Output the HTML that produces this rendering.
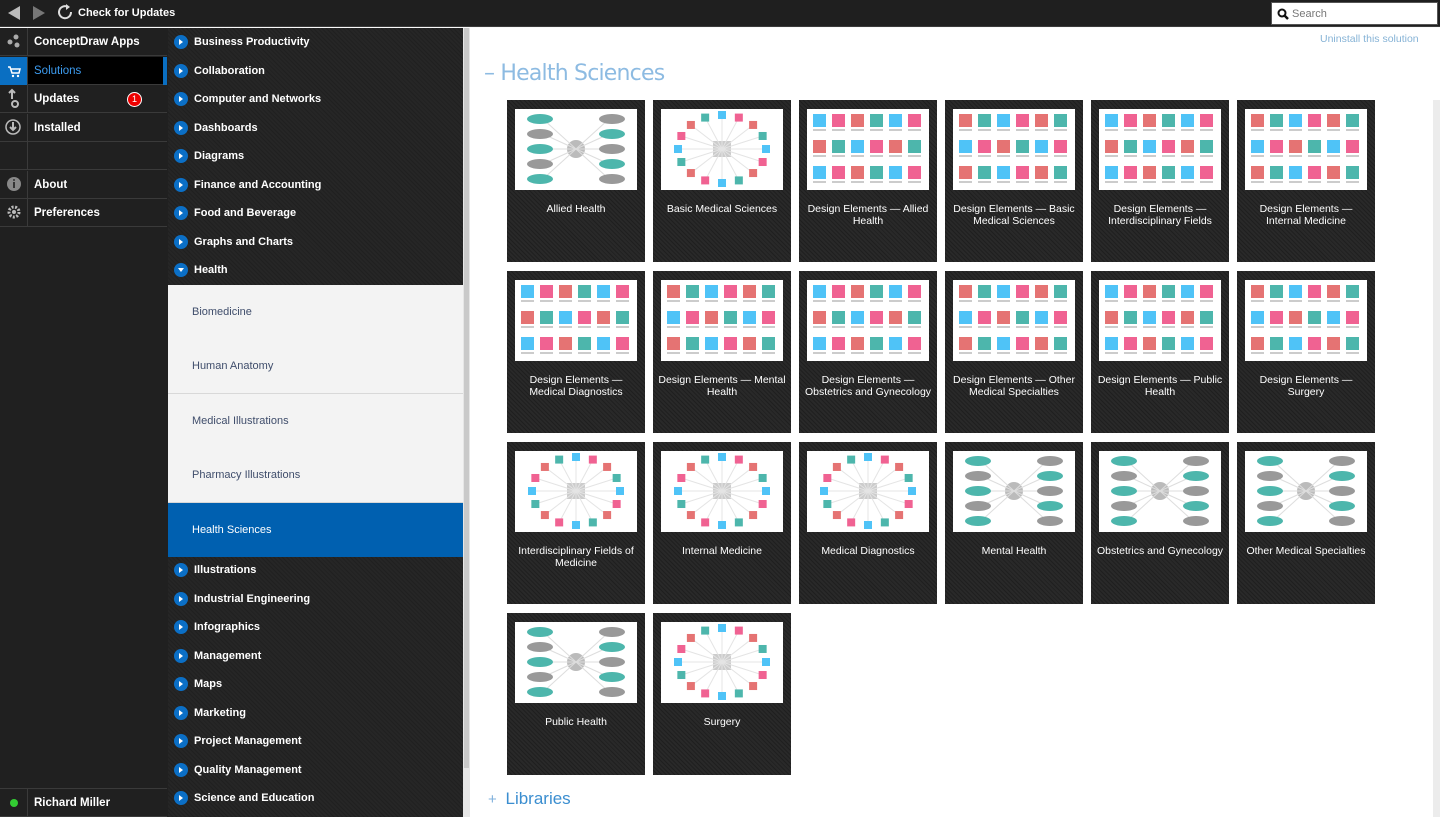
<!DOCTYPE html>
<html><head><meta charset="utf-8"><style>
*{margin:0;padding:0;box-sizing:border-box}
body{width:1440px;height:817px;overflow:hidden;background:#fafafa;font-family:"Liberation Sans",sans-serif;position:relative}
.top{position:absolute;left:0;top:0;width:1440px;height:27px;background:#1f1f1f;border-bottom:1px solid #3a3a3a}
.top .t{position:absolute;left:78px;top:7px;color:#fff;font-size:11px;font-weight:bold}
.search{position:absolute;left:1271px;top:2px;width:167px;height:23px;background:#fff;border:1px solid #555}
.search span{position:absolute;left:20px;top:5px;font-size:11px;color:#777}
.nav{position:absolute;left:0;top:28px;width:168px;height:789px;background:#202020}
.nav .r{position:absolute;left:0;width:167px;height:28px;border-bottom:1px solid #3a3a3a}
.nav .r .ic{position:absolute;left:0;top:0;width:28px;height:28px;border-right:1px solid #3a3a3a}
.nav .r span{position:absolute;left:34px;top:8px;color:#fff;font-size:11.5px;font-weight:bold}
.col2{position:absolute;left:168px;top:28px;width:295px;height:789px;background:#242424;background-image:repeating-linear-gradient(45deg,#202020 0 1px,#262626 1px 3px)}
.it{position:absolute;left:0;width:295px;height:28px}
.it i{position:absolute;left:6px;top:7px;width:14px;height:14px;border-radius:50%;background:#0b6fc6}
.it i:after{content:"";position:absolute;left:5px;top:4px;border-left:4px solid #fff;border-top:3px solid transparent;border-bottom:3px solid transparent}
.it i.d:after{left:4px;top:5px;border-top:4px solid #fff;border-left:3px solid transparent;border-right:3px solid transparent;border-bottom:0}
.it span{position:absolute;left:26px;top:8px;color:#fff;font-size:11px;font-weight:bold}
.sub{position:absolute;left:0;width:295px;height:55px;background:#f3f3f3;border-bottom:1px solid #d8d8d8}
.sub span{position:absolute;left:24px;top:21px;font-size:11px;color:#3f4d6b}
.sb{position:absolute;left:463px;top:28px;width:7px;height:789px;background:#e6e6e6}
.sb div{position:absolute;left:1px;top:0;width:5px;height:740px;background:#c9c9c9}
.content{position:absolute;left:470px;top:28px;width:970px;height:789px;background:#fff}
h1{position:absolute;left:484px;top:61px;font-weight:normal;font-size:22px;color:#8dbbe2;font-family:"DejaVu Sans","Liberation Sans",sans-serif;letter-spacing:-0.8px}
.card{position:absolute;width:138px;height:162px;background:#232323;background-image:repeating-linear-gradient(45deg,#1f1f1f 0 1px,#292929 1px 3px)}
.card .th{position:absolute;left:8px;top:9px;width:122px;height:81px;background:#fff;overflow:hidden}
.card .tt{position:absolute;left:4px;right:4px;top:103px;text-align:center;color:#fff;font-size:10.5px;line-height:12px}
.rsb{position:absolute;left:1433px;top:100px;width:7px;height:717px;background:#ececec}
</style></head><body>
<div class="top">
<svg style="position:absolute;left:6px;top:5px" width="16" height="16"><path d="M14 1L2 8l12 7z" fill="#bbb"/></svg>
<svg style="position:absolute;left:31px;top:5px" width="16" height="16"><path d="M2 1l12 7-12 7z" fill="#777"/></svg>
<svg style="position:absolute;left:57px;top:4px" width="18" height="18"><path d="M14 8a6 6 0 1 1-3-5" fill="none" stroke="#ddd" stroke-width="2"/><path d="M9 0l4 3-4 3z" fill="#ddd"/></svg>
<div class="t">Check for Updates</div>
<div class="search"><svg style="position:absolute;left:5px;top:5px" width="12" height="12"><circle cx="5" cy="5" r="3.5" fill="none" stroke="#111" stroke-width="2"/><path d="M7.5 7.5l3.5 3.5" stroke="#111" stroke-width="2.5"/></svg><span>Search</span></div>
</div>
<div class="nav">
<div class="r" style="top:0"><div class="ic"><svg width="28" height="28"><circle cx="10" cy="14" r="2.5" fill="#aaa"/><circle cx="16" cy="9" r="2.5" fill="#aaa"/><circle cx="17" cy="17" r="2.5" fill="#aaa"/></svg></div><span>ConceptDraw Apps</span></div>
<div class="r" style="top:29px;background:#000"><div class="ic" style="background:#0a6fc2"><svg width="28" height="28"><path d="M8 10h2l2 6h7l1-4h-9" fill="none" stroke="#fff" stroke-width="1.5"/><circle cx="13" cy="19" r="1.2" fill="#fff"/><circle cx="18" cy="19" r="1.2" fill="#fff"/></svg></div><span style="color:#3d9cf0;font-weight:normal">Solutions</span><div style="position:absolute;right:0;top:0;width:4px;height:28px;background:#0a6fc2"></div></div>
<div class="r" style="top:57px"><div class="ic"><svg width="28" height="28"><path d="M12 5v9M9 8l3-3 3 3" stroke="#bbb" stroke-width="2" fill="none"/><circle cx="15" cy="19" r="3" fill="none" stroke="#bbb" stroke-width="2"/></svg></div><span>Updates</span><div style="position:absolute;left:127px;top:7px;width:15px;height:15px;border-radius:50%;background:#e00;border:1.5px solid #fff;color:#fff;font-size:9px;text-align:center;line-height:12px">1</div></div>
<div class="r" style="top:86px"><div class="ic"><svg width="28" height="28"><circle cx="13" cy="13" r="7" fill="none" stroke="#bbb" stroke-width="1.5"/><path d="M13 8v8M10 13l3 3 3-3" stroke="#bbb" stroke-width="2" fill="none"/></svg></div><span>Installed</span></div>
<div class="r" style="top:114px"><div class="ic"></div></div>
<div class="r" style="top:143px"><div class="ic"><svg width="28" height="28"><circle cx="14" cy="13" r="7" fill="#888"/><rect x="13" y="11" width="2" height="6" fill="#333"/><circle cx="14" cy="9" r="1" fill="#333"/></svg></div><span>About</span></div>
<div class="r" style="top:171px"><div class="ic"><svg width="28" height="28"><circle cx="14" cy="13" r="5" fill="none" stroke="#bbb" stroke-width="3" stroke-dasharray="2 1.5"/><circle cx="14" cy="13" r="2" fill="#bbb"/></svg></div><span>Preferences</span></div>
<div class="r" style="top:760px;border-top:1px solid #3a3a3a;height:29px"><div class="ic"><div style="position:absolute;left:10px;top:10px;width:8px;height:8px;border-radius:50%;background:#3c3"></div></div><span>Richard Miller</span></div>
</div>
<div class="col2">
<div class="it" style="top:0"><i></i><span>Business Productivity</span></div>
<div class="it" style="top:28.5px"><i></i><span>Collaboration</span></div>
<div class="it" style="top:57px"><i></i><span>Computer and Networks</span></div>
<div class="it" style="top:85.5px"><i></i><span>Dashboards</span></div>
<div class="it" style="top:114px"><i></i><span>Diagrams</span></div>
<div class="it" style="top:142.5px"><i></i><span>Finance and Accounting</span></div>
<div class="it" style="top:171px"><i></i><span>Food and Beverage</span></div>
<div class="it" style="top:199.5px"><i></i><span>Graphs and Charts</span></div>
<div class="it" style="top:228px"><i class="d"></i><span>Health</span></div>
<div class="sub" style="top:257px"><span>Biomedicine</span></div>
<div class="sub" style="top:311px"><span>Human Anatomy</span></div>
<div class="sub" style="top:366px"><span>Medical Illustrations</span></div>
<div class="sub" style="top:420px"><span>Pharmacy Illustrations</span></div>
<div class="sub" style="top:475px;height:54px;background:#0060b0;border:0"><span style="color:#fff">Health Sciences</span></div>
<div class="it" style="top:528px"><i></i><span>Illustrations</span></div>
<div class="it" style="top:556.5px"><i></i><span>Industrial Engineering</span></div>
<div class="it" style="top:585px"><i></i><span>Infographics</span></div>
<div class="it" style="top:613.5px"><i></i><span>Management</span></div>
<div class="it" style="top:642px"><i></i><span>Maps</span></div>
<div class="it" style="top:670.5px"><i></i><span>Marketing</span></div>
<div class="it" style="top:699px"><i></i><span>Project Management</span></div>
<div class="it" style="top:727.5px"><i></i><span>Quality Management</span></div>
<div class="it" style="top:756px"><i></i><span>Science and Education</span></div>
</div>
<div class="sb"><div></div></div>
<div class="content"></div>
<div style="position:absolute;left:1320px;top:33px;font-size:10.5px;color:#86b3d6">Uninstall this solution</div>
<h1>– Health Sciences</h1>
<div class="rsb"></div>
<div id="cards">
<div class="card" style="left:507px;top:100px"><div class="th m"></div><div class="tt">Allied Health</div></div>
<div class="card" style="left:653px;top:100px"><div class="th r"></div><div class="tt">Basic Medical Sciences</div></div>
<div class="card" style="left:799px;top:100px"><div class="th g"></div><div class="tt">Design Elements — Allied Health</div></div>
<div class="card" style="left:945px;top:100px"><div class="th g"></div><div class="tt">Design Elements — Basic Medical Sciences</div></div>
<div class="card" style="left:1091px;top:100px"><div class="th g"></div><div class="tt">Design Elements — Interdisciplinary Fields</div></div>
<div class="card" style="left:1237px;top:100px"><div class="th g"></div><div class="tt">Design Elements — Internal Medicine</div></div>
<div class="card" style="left:507px;top:271px"><div class="th g"></div><div class="tt">Design Elements — Medical Diagnostics</div></div>
<div class="card" style="left:653px;top:271px"><div class="th g"></div><div class="tt">Design Elements — Mental Health</div></div>
<div class="card" style="left:799px;top:271px"><div class="th g"></div><div class="tt">Design Elements — Obstetrics and Gynecology</div></div>
<div class="card" style="left:945px;top:271px"><div class="th g"></div><div class="tt">Design Elements — Other Medical Specialties</div></div>
<div class="card" style="left:1091px;top:271px"><div class="th g"></div><div class="tt">Design Elements — Public Health</div></div>
<div class="card" style="left:1237px;top:271px"><div class="th g"></div><div class="tt">Design Elements — Surgery</div></div>
<div class="card" style="left:507px;top:442px"><div class="th r"></div><div class="tt">Interdisciplinary Fields of Medicine</div></div>
<div class="card" style="left:653px;top:442px"><div class="th r"></div><div class="tt">Internal Medicine</div></div>
<div class="card" style="left:799px;top:442px"><div class="th r"></div><div class="tt">Medical Diagnostics</div></div>
<div class="card" style="left:945px;top:442px"><div class="th m"></div><div class="tt">Mental Health</div></div>
<div class="card" style="left:1091px;top:442px"><div class="th m"></div><div class="tt">Obstetrics and Gynecology</div></div>
<div class="card" style="left:1237px;top:442px"><div class="th m"></div><div class="tt">Other Medical Specialties</div></div>
<div class="card" style="left:507px;top:613px"><div class="th m"></div><div class="tt">Public Health</div></div>
<div class="card" style="left:653px;top:613px"><div class="th r"></div><div class="tt">Surgery</div></div>
</div>
<div style="position:absolute;left:488px;top:789px;font-size:17px;color:#3b8ed0"><span style="color:#7fb0dc;font-size:15px;margin-right:4px">+</span> Libraries</div>
<script>
var cols=["#4db6ac","#e57373","#7e57c2","#4fc3f7","#f06292","#ffb74d","#26a69a","#ba68c8","#64b5f6","#ef9a9a"];
var k=0;function c(){k=(k*7+3)%cols.length;return cols[k];}
document.querySelectorAll('.th').forEach(function(t){
 var s='<svg width="122" height="81">';
 if(t.classList.contains('g')){
  for(var y=0;y<3;y++)for(var x=0;x<6;x++){s+='<rect x="'+(6+x*19)+'" y="'+(5+y*26)+'" width="13" height="13" fill="'+c()+'"/><rect x="'+(6+x*19)+'" y="'+(20+y*26)+'" width="13" height="2" fill="#ccc"/>';}
 } else if(t.classList.contains('m')){
  s+='<circle cx="61" cy="40" r="9" fill="#bbb"/>';
  for(var i=0;i<5;i++){var yy=10+i*15;s+='<path d="M61 40L28 '+yy+'M61 40L94 '+yy+'" stroke="#ddd"/><ellipse cx="25" cy="'+yy+'" rx="13" ry="5" fill="'+(i%2?'#999':'#4db6ac')+'"/><ellipse cx="97" cy="'+yy+'" rx="13" ry="5" fill="'+(i%2?'#4db6ac':'#999')+'"/>';}
 } else {
  s+='<rect x="52" y="32" width="18" height="16" fill="#ccc"/>';
  for(var i=0;i<16;i++){var a=i/16*6.283;var x2=61+44*Math.cos(a),y2=40+34*Math.sin(a);s+='<path d="M61 40L'+x2+' '+y2+'" stroke="#e4e4e4"/><rect x="'+(x2-4)+'" y="'+(y2-4)+'" width="8" height="8" fill="'+c()+'"/>';}
 }
 t.innerHTML=s+'</svg>';
});
</script>
</body></html>
